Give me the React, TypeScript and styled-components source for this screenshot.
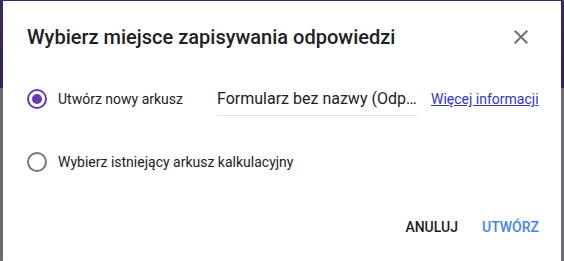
import React from "react";
import styled, { createGlobalStyle } from "styled-components";

const Global = createGlobalStyle`
  html, body { margin: 0; padding: 0; }
  body { font-family: Roboto, "Noto Sans", Arial, sans-serif; -webkit-font-smoothing: antialiased; }
`;

const Backdrop = styled.div`
  width: 564px;
  height: 261px;
  box-sizing: border-box;
  padding: 1px 3px 0 3px;
  overflow: hidden;
  background: linear-gradient(to bottom, #3d2b66 0, #3d2b66 88px, #7a787d 88px);
`;

const Dialog = styled.div`
  width: 558px;
  height: 262px;
  background: #fff;
  box-shadow: 0 11px 15px -7px rgba(0,0,0,.2), 0 24px 38px 3px rgba(0,0,0,.14);
  display: flex;
  flex-direction: column;
  box-sizing: border-box;
  padding: 22px 0 0 0;
`;

const Header = styled.div`
  display: flex;
  align-items: center;
  justify-content: space-between;
  padding: 0 28px 0 24px;
  height: 28px;
`;

const Title = styled.h2`
  margin: 0;
  font-size: 20px;
  line-height: 28px;
  font-weight: 500;
  color: #202124;
`;

const CloseButton = styled.button`
  width: 24px;
  height: 24px;
  padding: 0;
  border: 0;
  background: none;
  display: flex;
  align-items: center;
  justify-content: center;
  color: #707070;
  cursor: pointer;
`;

const Options = styled.div`
  display: flex;
  flex-direction: column;
  gap: 15px;
  padding: 24px 22px 0 24px;
`;

const OptionRow = styled.label`
  display: flex;
  align-items: center;
  height: 48px;
`;

const Radio = styled.span<{ $checked?: boolean }>`
  width: 20px;
  height: 20px;
  box-sizing: border-box;
  border-radius: 50%;
  border: 2px solid ${(p) => (p.$checked ? "#673ab7" : "#757575")};
  display: flex;
  align-items: center;
  justify-content: center;
  flex: none;
  &::after {
    content: "";
    width: 10px;
    height: 10px;
    border-radius: 50%;
    background: ${(p) => (p.$checked ? "#673ab7" : "transparent")};
  }
`;

const OptionLabel = styled.span<{ $width?: number }>`
  margin-left: 11px;
  font-size: 14px;
  color: #202124;
  white-space: nowrap;
  ${(p) => (p.$width ? `width: ${p.$width}px; flex: none;` : "")}
`;

const NameField = styled.div`
  width: 200px;
  flex: none;
  height: 30px;
  box-sizing: border-box;
  border-bottom: 1px solid #e0e0e0;
  font-size: 16px;
  line-height: 26px;
  color: #202124;
  white-space: nowrap;
  overflow: hidden;
  text-overflow: ellipsis;
  margin-top: 4px;
`;

const MoreLink = styled.a`
  margin-left: 14px;
  font-size: 14px;
  color: #3333cc;
  text-decoration: underline;
  white-space: nowrap;
`;

const Footer = styled.div`
  display: flex;
  justify-content: flex-end;
  gap: 8px;
  padding: 23px 14px 0 0;
`;

const TextButton = styled.button<{ $primary?: boolean }>`
  height: 36px;
  padding: 0 8px;
  border: 0;
  background: none;
  font-family: inherit;
  font-size: 14px;
  font-weight: 500;
  text-transform: uppercase;
  color: ${(p) => (p.$primary ? "#4285f4" : "#202124")};
  cursor: pointer;
`;

const CloseIcon = () => (
  <svg width="24" height="24" viewBox="0 0 24 24" fill="currentColor">
    <path d="M19 6.41L17.59 5 12 10.59 6.41 5 5 6.41 10.59 12 5 17.59 6.41 19 12 13.41 17.59 19 19 17.59 13.41 12z" />
  </svg>
);

export default function App() {
  return (
    <>
      <Global />
      <Backdrop>
        <Dialog>
          <Header>
            <Title>Wybierz miejsce zapisywania odpowiedzi</Title>
            <CloseButton aria-label="Zamknij">
              <CloseIcon />
            </CloseButton>
          </Header>
          <Options>
            <OptionRow>
              <Radio $checked />
              <OptionLabel $width={159}>Utwórz nowy arkusz</OptionLabel>
              <NameField>Formularz bez nazwy (Odpowiedzi)</NameField>
              <MoreLink href="#">Więcej informacji</MoreLink>
            </OptionRow>
            <OptionRow>
              <Radio />
              <OptionLabel>Wybierz istniejący arkusz kalkulacyjny</OptionLabel>
            </OptionRow>
          </Options>
          <Footer>
            <TextButton>Anuluj</TextButton>
            <TextButton $primary>Utwórz</TextButton>
          </Footer>
        </Dialog>
      </Backdrop>
    </>
  );
}
